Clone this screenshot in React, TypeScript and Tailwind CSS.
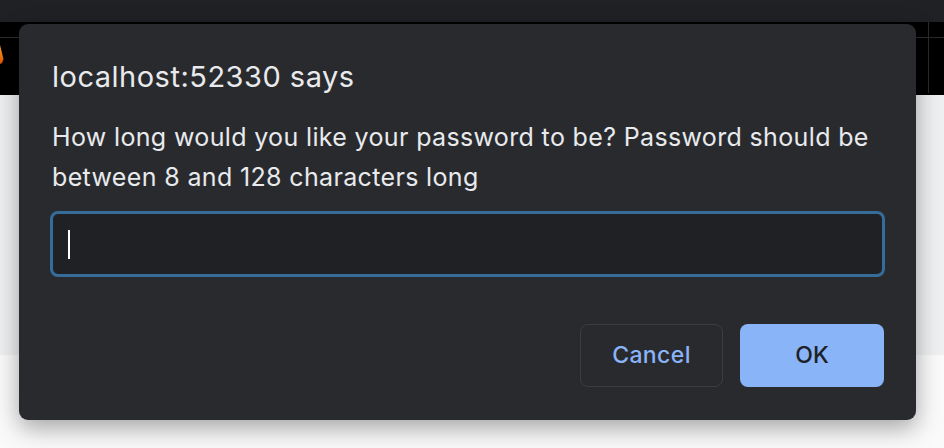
import React from "react";

export default function App() {
  const font = { fontFamily: 'Inter, "Noto Sans", "Liberation Sans", sans-serif' };
  return (
    <div className="relative w-[944px] h-[448px] overflow-hidden bg-white" style={font}>
      {/* page background */}
      <div className="flex flex-col">
        <div className="h-[22px] bg-[#202124]" />
        <div className="h-[73px] bg-black flex flex-col">
          <div className="h-[16px] border-b border-[#2a2b2d] flex">
            <div className="flex-1" />
            <div className="w-[16px] border-l border-[#2a2b2d]" />
          </div>
          <div className="flex-1 flex items-start">
            <svg width="4" height="20" viewBox="0 0 4 20" className="mt-[7px]">
              <defs>
                <linearGradient id="fl" x1="0" y1="0" x2="0" y2="1">
                  <stop offset="0" stopColor="#f9a825" />
                  <stop offset="1" stopColor="#e65100" />
                </linearGradient>
              </defs>
              <path d="M0 0 L3.5 14 L2 18 L0 19 Z" fill="url(#fl)" />
            </svg>
            <div className="flex-1" />
            <div className="w-[16px] h-[55px] border-l border-[#2a2b2d]" />
          </div>
        </div>
        <div className="h-[260px] bg-[#eef0f2]" />
        <div className="h-[93px] bg-[#fafafa]" />
      </div>

      {/* dialog overlay */}
      <div className="absolute left-[19px] top-[24px] w-[897px] h-[396px] rounded-[9px] bg-[#292a2d] shadow-[0_8px_24px_rgba(0,0,0,0.35)] flex flex-col px-[31px] pt-[37px] pb-[33px]">
        <div className="text-[29px] leading-[32px] tracking-[0.5px] text-[#e8eaed] pl-[2px]">localhost:52330 says</div>
        <div className="mt-[24px] text-[25px] leading-[40px] tracking-[0.35px] text-[#e8eaed] pl-[2px]">
          How long would you like your password to be? Password should be
          <br />
          between 8 and 128 characters long
        </div>
        <div className="mt-[14px] h-[66px] rounded-[8px] border-[3px] border-[#356c99] bg-[#202124] flex items-center pl-[15px]">
          <div className="w-[2px] h-[29px] bg-white" />
        </div>
        <div className="mt-auto flex justify-end gap-[17px] pr-[1px]">
          <div className="w-[143px] h-[63px] rounded-[8px] border border-[#3c3d41] flex items-center justify-center text-[23px] tracking-[0.4px] font-medium text-[#8ab4f8]">
            Cancel
          </div>
          <div className="w-[144px] h-[63px] rounded-[8px] bg-[#8ab4f8] flex items-center justify-center text-[23px] font-medium text-[#202124]">
            OK
          </div>
        </div>
      </div>
    </div>
  );
}
